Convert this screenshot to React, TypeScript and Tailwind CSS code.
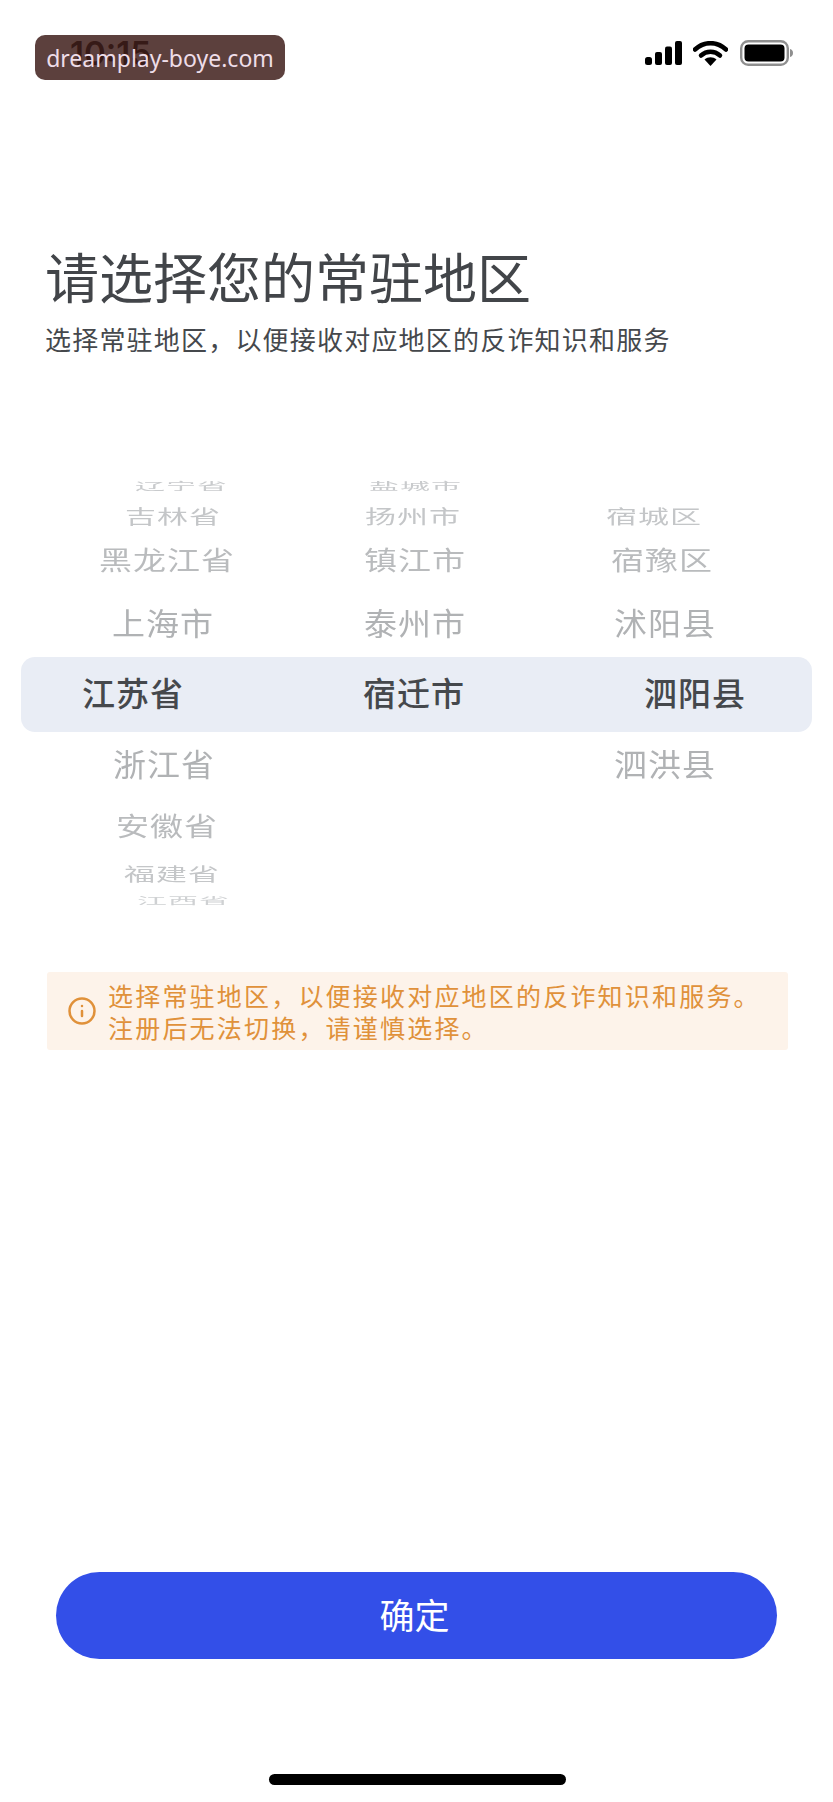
import { Info } from "lucide-react";

const cjk = "font-['Noto_Sans_CJK_SC','Noto_Sans',sans-serif]";

function Row({ className, children }: { className: string; children: React.ReactNode }) {
  return <div className={`grid grid-cols-[360px_240px_1fr] items-center overflow-hidden ${className}`}>{children}</div>;
}

function StatusIcons() {
  return (
    <div className="flex items-center mt-[2px]">
      <svg width="37" height="24" viewBox="0 0 37 24" className="mr-[11px]">
        <rect x="0" y="16" width="7" height="8" rx="2.5" fill="#000" />
        <rect x="10" y="11" width="7" height="13" rx="2" fill="#000" />
        <rect x="20" y="5.5" width="7" height="18.5" rx="2" fill="#000" />
        <rect x="30" y="0" width="7" height="24" rx="2" fill="#000" />
      </svg>
      <svg width="35" height="25" viewBox="0 0 35 25" className="mr-[12px]">
        <path d="M2 8.5C11 0 24 0 33 8.5" fill="none" stroke="#000" strokeWidth="4.5" strokeLinecap="round" />
        <path d="M8 14.5C13.5 9.5 21.5 9.5 27 14.5" fill="none" stroke="#000" strokeWidth="4.5" strokeLinecap="round" />
        <path d="M17.5 25L11.5 18.5C15 15.5 20 15.5 23.5 18.5Z" fill="#000" />
      </svg>
      <svg width="54" height="26" viewBox="0 0 54 26">
        <rect x="1.2" y="1.2" width="46.6" height="23.6" rx="7" fill="none" stroke="#8f8f8f" strokeWidth="2.4" />
        <rect x="4.5" y="4.5" width="40" height="17" rx="4" fill="#000" />
        <path d="M50 9C52 9.5 53 11 53 13C53 15 52 16.5 50 17Z" fill="#8f8f8f" />
      </svg>
    </div>
  );
}

export default function App() {
  return (
    <div className={`relative w-[833px] h-[1802px] overflow-hidden bg-white ${cjk}`}>
      <div className="h-[90px] pl-[70px] pr-[39px] pt-[38px] flex justify-between items-start">
        <span className="font-['Inter',sans-serif] font-semibold text-[33px] leading-[30px] text-black">10:15</span>
        <StatusIcons />
      </div>
      <div className="absolute left-[35px] top-[35px] w-[250px] h-[45px] pt-[2px] rounded-[10px] bg-[#3f1f1b]/85 flex items-center justify-center font-['Noto_Sans',sans-serif] text-[23px] text-[#eedde8]">
        dreamplay-boye.com
      </div>

      <div className="pl-[45px] mt-[156px]">
        <h1 className="text-[54px] leading-[60px] font-normal text-[#424549]">请选择您的常驻地区</h1>
        <p className="mt-[17px] text-[26px] leading-[32px] tracking-[1.2px] text-[#45484c]">{"选择常驻地区\uFF0C以便接收对应地区的反诈知识和服务"}</p>
      </div>

      <div className="mt-[124px] text-[33px] tracking-[1px] leading-none">
        <Row className="h-[13px] leading-[13px] text-[#c9cbcd] blur-[0.5px]">
          <div className="pl-[135px] scale-y-[0.35] text-[30px]">辽宁省</div>
          <div className="pl-[9px] scale-y-[0.35] text-[30px]">盐城市</div>
          <div />
        </Row>
        <Row className="h-[46px] text-[#c4c6c8] text-[31px]">
          <div className="pl-[125px] scale-y-[0.62]">吉林省</div>
          <div className="pl-[5px] scale-y-[0.62]">扬州市</div>
          <div className="pl-[6px] scale-y-[0.62]">宿城区</div>
        </Row>
        <Row className="h-[54px] pb-[11px] text-[#b9bbbd]">
          <div className="pl-[99px] scale-y-[0.78]">黑龙江省</div>
          <div className="pl-[4px] scale-y-[0.78]">镇江市</div>
          <div className="pl-[11px] scale-y-[0.78]">宿豫区</div>
        </Row>
        <Row className="h-[65px] pb-[4px] text-[#b0b2b4]">
          <div className="pl-[112px] scale-y-[0.93]">上海市</div>
          <div className="pl-[4px] scale-y-[0.93]">泰州市</div>
          <div className="pl-[14px] scale-y-[0.93]">沭阳县</div>
        </Row>
        <div className="h-[75px] pb-[4px] mx-[21px] rounded-[14px] bg-[#e9edf5] flex items-center pl-[61px] font-medium text-[#45484c]">
          <div className="w-[281px]">江苏省</div>
          <div className="w-[281px]">宿迁市</div>
          <div>泗阳县</div>
        </div>
        <Row className="h-[67px] pb-[4px] text-[#b0b2b4]">
          <div className="pl-[113px] scale-y-[0.93]">浙江省</div>
          <div />
          <div className="pl-[14px] scale-y-[0.93]">泗洪县</div>
        </Row>
        <Row className="h-[57px] pb-[4px] text-[#b9bbbd]">
          <div className="pl-[116px] scale-y-[0.78]">安徽省</div>
          <div />
          <div />
        </Row>
        <Row className="h-[37px] pb-[2px] text-[#c4c6c8] text-[31px]">
          <div className="pl-[124px] scale-y-[0.57]">福建省</div>
          <div />
          <div />
        </Row>
        <Row className="h-[15px] leading-[15px] text-[#cfd1d3] text-[30px] blur-[0.5px]">
          <div className="pl-[137px] scale-y-[0.3]">江西省</div>
          <div />
          <div />
        </Row>
      </div>

      <div className="mt-[64px] ml-[47px] w-[741px] h-[78px] rounded-[3px] bg-[#fdf3ea] flex items-center pl-[20px] gap-[11px] text-[#e0913a]">
        <Info size={30} strokeWidth={2} className="shrink-0" />
        <div className="text-[25px] leading-[32px] tracking-[2.2px]">
          <div>{"选择常驻地区\uFF0C以便接收对应地区的反诈知识和服务。"}</div>
          <div>{"注册后无法切换\uFF0C请谨慎选择。"}</div>
        </div>
      </div>

      <button className="mt-[522px] ml-[56px] w-[721px] h-[87px] pb-[3px] pr-[4px] rounded-full bg-[#334fe8] text-white text-[35px] flex items-center justify-center">
        确定
      </button>

      <div className="mt-[115px] ml-[269px] w-[297px] h-[11px] rounded-full bg-black" />
    </div>
  );
}
